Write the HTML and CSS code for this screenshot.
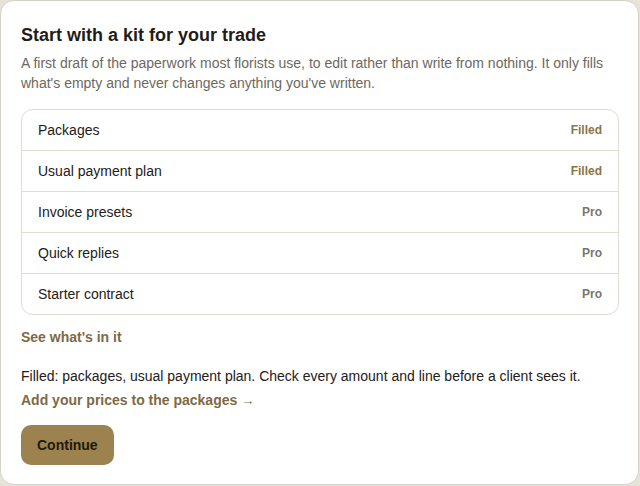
FILE: index.html
```html
<!DOCTYPE html>
<html lang="en">
<head>
<meta charset="utf-8">
<title>Start with a kit for your trade</title>
<link rel="stylesheet" href="styles.css">
</head>
<body>
<section class="card">
  <h1 class="title">Start with a kit for your trade</h1>
  <p class="desc">A first draft of the paperwork most florists use, to edit rather than write from nothing. It only fills what's empty and never changes anything you've written.</p>
  <ul class="list">
    <li class="row"><span>Packages</span><span class="badge filled">Filled</span></li>
    <li class="row"><span>Usual payment plan</span><span class="badge filled">Filled</span></li>
    <li class="row"><span>Invoice presets</span><span class="badge pro">Pro</span></li>
    <li class="row"><span>Quick replies</span><span class="badge pro">Pro</span></li>
    <li class="row"><span>Starter contract</span><span class="badge pro">Pro</span></li>
  </ul>
  <a class="link see" href="#">See what's in it</a>
  <p class="note">Filled: packages, usual payment plan. Check every amount and line before a client sees it.</p>
  <a class="link add" href="#">Add your prices to the packages <span class="arrow">→</span></a>
  <button class="btn" type="button">Continue</button>
</section>
</body>
</html>
```

FILE: styles.css
```css
html, body {
  margin: 0;
  padding: 0;
}
body {
  background: #e6e3d7;
  font-family: "Liberation Sans", Arial, sans-serif;
  width: 640px;
  height: 486px;
  overflow: hidden;
}
.card {
  box-sizing: border-box;
  width: 639px;
  height: 485px;
  background: #ffffff;
  border: 1px solid #d6d2c4;
  border-radius: 14px;
  padding: 23px 19px 0 20px;
  display: flex;
  flex-direction: column;
  align-items: flex-start;
}
.title {
  margin: 0;
  font-size: 18px;
  line-height: 22px;
  font-weight: 700;
  color: #1f1d1a;
}
.desc {
  margin: 7px 0 0 0;
  font-size: 14px;
  line-height: 20px;
  color: #6d6861;
}
.list {
  list-style: none;
  margin: 16px 0 0 0;
  padding: 0;
  align-self: stretch;
  border: 1px solid #e0ddd3;
  border-radius: 12px;
}
.row {
  display: flex;
  justify-content: space-between;
  align-items: center;
  height: 40px;
  padding: 0 16px;
  font-size: 14px;
  color: #222019;
  border-top: 1px solid #e0ddd3;
}
.row:first-child {
  border-top: none;
}
.badge {
  font-size: 12px;
  font-weight: 700;
}
.badge.filled {
  color: #8a7448;
}
.badge.pro {
  color: #7a756d;
}
.link {
  font-size: 14px;
  font-weight: 700;
  color: #7d6a45;
  text-decoration: none;
}
.see {
  margin-top: 13px;
  line-height: 18px;
}
.note {
  margin: 21px 0 0 0;
  font-size: 14px;
  line-height: 18px;
  color: #222019;
}
.add {
  margin-top: 6px;
  line-height: 18px;
}
.arrow {
  font-weight: 400;
  font-size: 13px;
}
.btn {
  margin-top: 15px;
  height: 40px;
  padding: 0 16px;
  border: none;
  border-radius: 10px;
  background: #9b824e;
  color: #21190c;
  font-family: "Liberation Sans", Arial, sans-serif;
  font-size: 14px;
  font-weight: 700;
}
```
